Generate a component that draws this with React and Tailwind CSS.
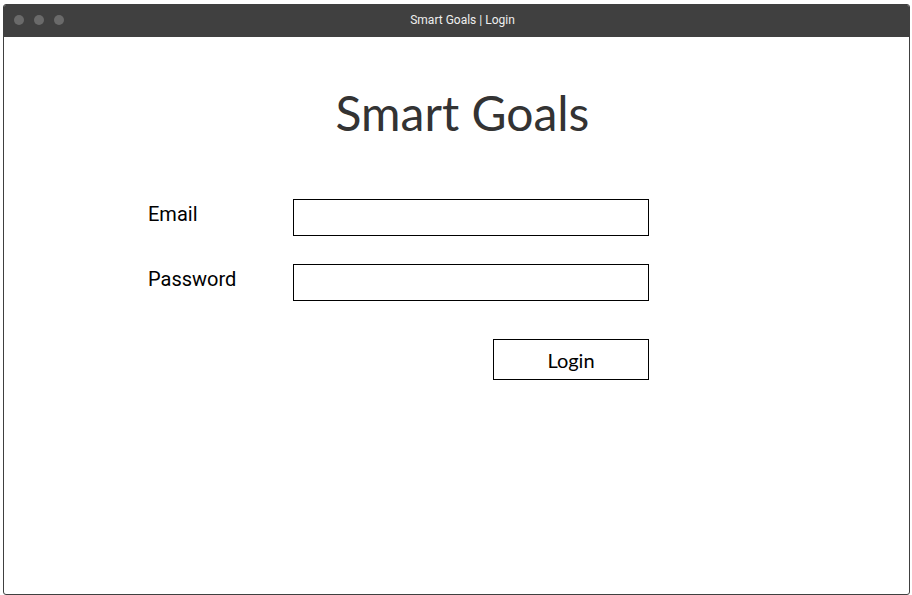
export default function App() {
  return (
    <div className="w-[912px] h-[595px] bg-white pt-[4px] pl-[3px]" style={{ fontFamily: "Roboto, sans-serif" }}>
      <div className="w-[907px] h-[591px] border border-[#404040] rounded-[3px] flex flex-col overflow-hidden">
        <div className="h-[32px] bg-[#404040] flex items-center relative shrink-0 pb-[3px]">
          <div className="flex gap-[10px] pl-[10px]">
            <span className="w-[10px] h-[10px] rounded-full bg-[#6a6a6a]"></span>
            <span className="w-[10px] h-[10px] rounded-full bg-[#6a6a6a]"></span>
            <span className="w-[10px] h-[10px] rounded-full bg-[#6a6a6a]"></span>
          </div>
          <div className="absolute inset-0 flex items-center justify-center pl-[12px] pb-[2px] text-[12px] text-[#eeeeee]" style={{ fontFamily: "Roboto, sans-serif" }}>
            Smart Goals | Login
          </div>
        </div>
        <div className="flex-1 flex flex-col">
          <h1 className="mt-[48px] text-center pl-[12px] text-[48px] leading-[56px] text-[#333333]" style={{ fontFamily: "Lato, sans-serif" }}>
            Smart Goals
          </h1>
          <div className="mt-[58px] pl-[144px] flex flex-col">
            <div className="flex items-start">
              <label className="w-[145px] text-[20px] leading-[30px] text-black">Email</label>
              <div className="w-[356px] h-[37px] border border-black"></div>
            </div>
            <div className="flex items-start mt-[28px]">
              <label className="w-[145px] text-[20px] leading-[30px] text-black">Password</label>
              <div className="w-[356px] h-[37px] border border-black"></div>
            </div>
            <div className="flex mt-[38px] pl-[345px]">
              <button className="w-[156px] h-[41px] border border-black text-[20px] text-black" style={{ fontFamily: "Lato, sans-serif" }}>
                Login
              </button>
            </div>
          </div>
        </div>
      </div>
    </div>
  );
}
